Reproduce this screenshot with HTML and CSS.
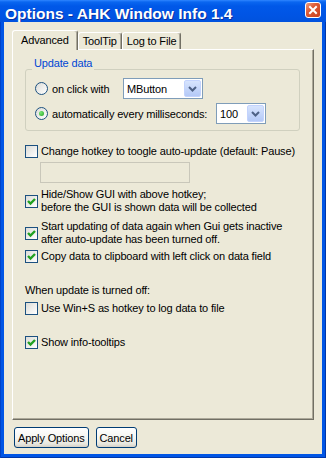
FILE: index.html
```html
<!DOCTYPE html>
<html lang="en">
<head>
  <meta charset="UTF-8">
  <meta name="viewport" content="width=device-width, initial-scale=1.0">
  <title>Options - AHK Window Info 1.4</title>
  <link rel="stylesheet" href="styles.css">
</head>
<body>
  <div class="window">
    <div class="titlebar">
      <span class="title">Options - AHK Window Info 1.4</span>
      <button class="close" aria-label="Close">
        <svg width="14" height="14" viewBox="0 0 14 14">
          <path d="M4 4 L10 10 M10 4 L4 10" stroke="#fff" stroke-width="2" stroke-linecap="square"/>
        </svg>
      </button>
    </div>

    <div class="client">
      <div class="tabs">
        <div class="tab active">Advanced</div>
        <div class="tab">ToolTip</div>
        <div class="tab">Log to File</div>
      </div>

      <div class="panel">
        <div class="group">
          <div class="group-title">Update data</div>
          <div class="opt-row">
            <label class="radio-label short"><span class="radio"></span>on click with</label>
            <div class="combo wide">
              <span class="combo-text">MButton</span>
              <span class="combo-btn">
                <svg width="9" height="6" viewBox="0 0 9 6"><path d="M1 1 L4.5 4.5 L8 1" fill="none" stroke="#4D6185" stroke-width="2"/></svg>
              </span>
            </div>
          </div>
          <div class="opt-row">
            <label class="radio-label long"><span class="radio on"></span>automatically every milliseconds:</label>
            <div class="combo narrow">
              <span class="combo-text">100</span>
              <span class="combo-btn">
                <svg width="9" height="6" viewBox="0 0 9 6"><path d="M1 1 L4.5 4.5 L8 1" fill="none" stroke="#4D6185" stroke-width="2"/></svg>
              </span>
            </div>
          </div>
        </div>

        <label class="check gap-14"><span class="box"></span>Change hotkey to toogle auto-update (default: Pause)</label>
        <div class="hotkey-edit"></div>

        <label class="check gap-5"><span class="box on"><svg width="11" height="11" viewBox="0 0 11 11"><polyline points="2,5 4.5,7.5 9,3" fill="none" stroke="#21A121" stroke-width="2.4"/></svg></span>Hide/Show GUI with above hotkey;<br>before the GUI is shown data will be collected</label>
        <label class="check gap-6"><span class="box on"><svg width="11" height="11" viewBox="0 0 11 11"><polyline points="2,5 4.5,7.5 9,3" fill="none" stroke="#21A121" stroke-width="2.4"/></svg></span>Start updating of data again when Gui gets inactive<br>after auto-update has been turned off.</label>
        <label class="check gap-4"><span class="box on"><svg width="11" height="11" viewBox="0 0 11 11"><polyline points="2,5 4.5,7.5 9,3" fill="none" stroke="#21A121" stroke-width="2.4"/></svg></span>Copy data to clipboard with left click on data field</label>

        <div class="note">When update is turned off:</div>
        <label class="check gap-5"><span class="box"></span>Use Win+S as hotkey to log data to file</label>
        <label class="check gap-21"><span class="box on"><svg width="11" height="11" viewBox="0 0 11 11"><polyline points="2,5 4.5,7.5 9,3" fill="none" stroke="#21A121" stroke-width="2.4"/></svg></span>Show info-tooltips</label>
      </div>

      <div class="actions">
        <button class="btn">Apply Options</button>
        <button class="btn">Cancel</button>
      </div>
    </div>
  </div>
</body>
</html>
```

FILE: styles.css
```css
* {
  box-sizing: border-box;
}

body {
  margin: 0;
  font-family: "Liberation Sans", Arial, sans-serif;
  font-size: 11px;
  letter-spacing: -0.15px;
  color: #000;
}

.window {
  width: 326px;
  height: 458px;
  display: flex;
  flex-direction: column;
  background: #0055E5;
  box-shadow: inset 1px 0 #0042C8, inset -1px -1px #0036A8;
}

/* title bar */
.titlebar {
  height: 22px;
  flex: none;
  display: flex;
  align-items: flex-start;
  padding: 2px 5px 0;
  background: linear-gradient(to bottom, #2F86FF 0, #0A66F0 2px, #0058E8 6px, #0055E5 14px, #0052DE 100%);
}

.title {
  margin-top: 3px;
  line-height: 17px;
  font-size: 15.5px;
  font-weight: bold;
  letter-spacing: 0;
  color: #fff;
  text-shadow: 1px 1px #0A2F9E;
}

.close {
  margin-left: auto;
  width: 16px;
  height: 16px;
  padding: 0;
  border: 1px solid #fff;
  border-radius: 3px;
  background: linear-gradient(135deg, #EE9D80, #DD5A35 40%, #C8401E);
  display: flex;
  align-items: center;
  justify-content: center;
}

/* client area */
.client {
  flex: 1;
  margin: 0 4px 4px;
  padding: 8px 8px 6px;
  background: #ECE9D8;
  display: flex;
  flex-direction: column;
}

.tabs {
  height: 19px;
  display: flex;
  align-items: flex-end;
}

.tab {
  height: 17px;
  padding: 0 4px;
  border: 1px solid;
  border-bottom: none;
  border-color: #fff #716F64 #716F64 #fff;
  border-radius: 3px 3px 0 0;
  box-shadow: inset -1px 0 #ACA899;
  line-height: 16px;
  background: #ECE9D8;
}

.tab.active {
  height: 20px;
  margin-bottom: -1px;
  padding: 0 8px;
  line-height: 18px;
  position: relative;
  z-index: 1;
}

.panel {
  height: 371px;
  padding: 0 12px;
  border: 1px solid;
  border-color: #fff #716F64 #716F64 #fff;
  box-shadow: inset -1px -1px #ACA899;
}

/* group box */
.group {
  width: 275px;
  margin-top: 19px;
  padding: 0 9px 6px;
  border: 1px solid #D0D0BF;
  border-radius: 3px;
}

.group-title {
  display: table;
  margin: -13px 0 0 -3px;
  padding: 0 2px;
  line-height: 13px;
  color: #0046D5;
  background: #ECE9D8;
}

.opt-row {
  height: 21px;
  margin-top: 8px;
  display: flex;
  align-items: center;
}

.opt-row + .opt-row {
  margin-top: 4px;
}

.radio-label {
  display: flex;
  align-items: center;
  gap: 4px;
}

.radio-label.short {
  width: 88px;
}

.radio-label.long {
  width: 181px;
}

.radio {
  flex: none;
  width: 13px;
  height: 13px;
  border: 1px solid #1C5180;
  border-radius: 50%;
  background: linear-gradient(135deg, #DCDCD7, #fff);
  display: flex;
  align-items: center;
  justify-content: center;
}

.radio.on::after {
  content: "";
  width: 5px;
  height: 5px;
  border-radius: 50%;
  background: radial-gradient(circle at 35% 35%, #7AE876, #21A121);
}

.combo {
  height: 21px;
  padding: 1px 1px 1px 3px;
  border: 1px solid #7F9DB9;
  background: #fff;
  display: flex;
  align-items: center;
}

.combo.wide {
  width: 80px;
}

.combo.narrow {
  width: 50px;
}

.combo-text {
  flex: 1;
}

.combo-btn {
  width: 17px;
  height: 17px;
  border: 1px solid #C3D3FD;
  border-radius: 2px;
  background: linear-gradient(#D7E4FD, #B4C9F7);
  display: flex;
  align-items: center;
  justify-content: center;
}

/* check boxes */
.check {
  display: flex;
  align-items: center;
  gap: 3px;
  line-height: 13px;
}

.box {
  flex: none;
  width: 13px;
  height: 13px;
  border: 1px solid #1C5180;
  background: linear-gradient(135deg, #DCDCD7, #fff);
  display: flex;
}

.gap-4 { margin-top: 4px; }
.gap-5 { margin-top: 5px; }
.gap-6 { margin-top: 6px; }
.gap-14 { margin-top: 14px; }
.gap-21 { margin-top: 21px; }

.hotkey-edit {
  width: 150px;
  height: 21px;
  margin: 4px 0 0 15px;
  border: 1px solid #C9C7BA;
  background: #ECE9D8;
}

.note {
  margin-top: 21px;
  line-height: 13px;
}

/* buttons */
.actions {
  margin-top: 7px;
  padding-left: 2px;
  display: flex;
  gap: 7px;
}

.btn {
  height: 21px;
  padding: 0 3px;
  font: inherit;
  letter-spacing: inherit;
  color: #000;
  border: 1px solid #003C74;
  border-radius: 3px;
  background: linear-gradient(#fff, #F4F4F0 55%, #E6E5DD 85%, #D6D0C5);
}
```
